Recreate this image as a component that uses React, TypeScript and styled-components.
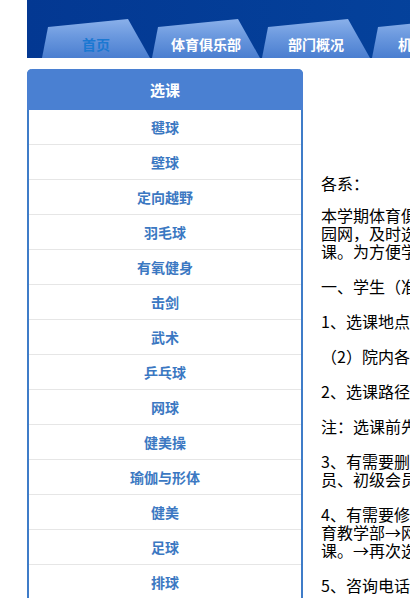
import { createGlobalStyle } from 'styled-components';
import styled from 'styled-components';

const GlobalStyle = createGlobalStyle`
  html, body {
    margin: 0;
    padding: 0;
    background: #ffffff;
    overflow: hidden;
  }
  body {
    font-family: "Noto Sans CJK SC", "Liberation Sans", sans-serif;
  }
`;

const tabs = ['首页', '体育俱乐部', '部门概况', '机构设置', '教学工作'];

const courses = [
  '毽球',
  '壁球',
  '定向越野',
  '羽毛球',
  '有氧健身',
  '击剑',
  '武术',
  '乒乓球',
  '网球',
  '健美操',
  '瑜伽与形体',
  '健美',
  '足球',
  '排球',
  '篮球',
];

// each paragraph is kept with its original line breaks
const paragraphs = [
  '本学期体育俱乐部选课工作即将开始，请各系尽快通知本系学生登录校\n园网，及时选择本人喜欢的俱乐部项目，按时参加俱乐部活动上\n课。为方便学生选课，现将有关事项通知如下：',
  '一、学生（准备选课的全体本科学生）',
  '1、选课地点：（1）学生宿舍、图书馆电子阅览室；',
  '（2）院内各处可以登录校园网的计算机。',
  '2、选课路径：登录校园网→体育教学部→网上选课。',
  '注：选课前先阅读俱乐部选课说明。',
  '3、有需要删除已选项目的同学，请联系俱乐部管理人员，由管理\n员、初级会员统一办理。',
  '4、有需要修改所选项目的同学，请按以下步骤操作：登录校园网→体\n育教学部→网上选课→删除原选项目→重新选择项目→确认选\n课。→再次选课确认。',
  '5、咨询电话：体育教学部办公室。',
];

export default function App() {
  return (
    <>
      <GlobalStyle />
      <Page>
        <Header>
          <TabRow>
            {tabs.map((t, i) => (
              <Tab key={t} $active={i === 0}>
                {t}
              </Tab>
            ))}
          </TabRow>
        </Header>
        <Main>
          <Sidebar>
            <SidebarTitle>选课</SidebarTitle>
            <CourseList>
              {courses.map((c) => (
                <CourseItem key={c}>{c}</CourseItem>
              ))}
            </CourseList>
          </Sidebar>
          <Content>
            <Greeting>各系：</Greeting>
            {paragraphs.map((p, i) => (
              <Para key={i}>{p}</Para>
            ))}
          </Content>
        </Main>
      </Page>
    </>
  );
}

const Page = styled.div`
  width: 1100px;
  padding-left: 27px;
`;

const Header = styled.header`
  height: 58px;
  background: linear-gradient(90deg, #033892 0%, #0548a2 60%, #0652aa 100%);
  display: flex;
  align-items: flex-end;
  padding-left: 15px;
`;

const TabRow = styled.nav`
  display: flex;
  gap: 2px;
`;

const Tab = styled.a<{ $active: boolean }>`
  display: block;
  width: 108px;
  height: 39px;
  box-sizing: border-box;
  padding-top: 17px;
  text-align: center;
  font-size: 14px;
  line-height: 16px;
  font-weight: bold;
  color: ${(p) => (p.$active ? '#1b78d2' : '#ffffff')};
  background: linear-gradient(180deg, #8ab0ea 0%, #6a98de 45%, #4a7ed0 100%);
  clip-path: polygon(0 100%, 6px 8px, 86px 0, 100% 100%);
  cursor: pointer;
`;

const Main = styled.div`
  display: flex;
  align-items: flex-start;
  margin-top: 11px;
`;

const Sidebar = styled.aside`
  width: 276px;
  flex-shrink: 0;
  box-sizing: border-box;
  border: 2px solid #3f7cc8;
  border-top: none;
  border-radius: 5px 5px 0 0;
  background: #ffffff;
`;

const SidebarTitle = styled.div`
  height: 41px;
  margin: 0 -2px;
  background: #4a80d2;
  border-radius: 5px 5px 0 0;
  color: #ffffff;
  font-size: 15px;
  font-weight: bold;
  line-height: 41px;
  text-align: center;
`;

const CourseList = styled.ul`
  list-style: none;
  margin: 0;
  padding: 0;
`;

const CourseItem = styled.li`
  height: 35px;
  box-sizing: border-box;
  border-bottom: 1px solid #e6e6e6;
  color: #3b78c2;
  font-size: 14px;
  font-weight: bold;
  line-height: 34px;
  text-align: center;
`;

const Content = styled.div`
  flex: 1;
  margin-left: 18px;
  padding-top: 105px;
  font-size: 16px;
  line-height: 18px;
  color: #000000;
`;

const Greeting = styled.p`
  margin: 0 0 14px;
`;

const Para = styled.p`
  margin: 0 0 17px;
  white-space: pre-line;
`;
